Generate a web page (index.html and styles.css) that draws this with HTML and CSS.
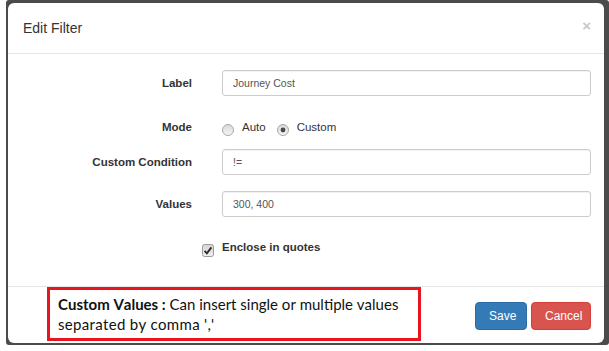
FILE: index.html
```html
<!DOCTYPE html>
<html>
<head>
<meta charset="utf-8">
<link rel="stylesheet" href="styles.css">
</head>
<body>
<div class="frame">
  <div class="modal">
    <div class="modal-header">
      <h4 class="title">Edit Filter</h4>
      <span class="close">×</span>
    </div>
    <div class="modal-body">
      <div class="row r1">
        <label class="lbl">Label</label>
        <div class="ctl"><input class="input" type="text" value="Journey Cost"></div>
      </div>
      <div class="row r2">
        <label class="lbl">Mode</label>
        <div class="ctl radios">
          <span class="radio">
            <svg width="12" height="12" viewBox="0 0 12 12"><defs><linearGradient id="rg" x1="0" y1="0" x2="0" y2="1"><stop offset="0" stop-color="#d8d8d8"/><stop offset="1" stop-color="#f7f7f7"/></linearGradient></defs><circle cx="6" cy="6" r="5.5" fill="url(#rg)" stroke="#a9a9a9"/></svg>
            <span class="rtext">Auto</span>
          </span>
          <span class="radio">
            <svg width="12" height="12" viewBox="0 0 12 12"><circle cx="6" cy="6" r="5.5" fill="url(#rg)" stroke="#a9a9a9"/><circle cx="6" cy="6" r="2.4" fill="#4a4a4a"/></svg>
            <span class="rtext">Custom</span>
          </span>
        </div>
      </div>
      <div class="row r3">
        <label class="lbl">Custom Condition</label>
        <div class="ctl"><input class="input" type="text" value="!="></div>
      </div>
      <div class="row r4">
        <label class="lbl">Values</label>
        <div class="ctl"><input class="input" type="text" value="300, 400"></div>
      </div>
      <div class="row r5">
        <span></span>
        <div class="ctl check">
          <svg class="cbox" width="12" height="13" viewBox="0 0 12 13"><defs><linearGradient id="cg" x1="0" y1="0" x2="0" y2="1"><stop offset="0" stop-color="#d4d4d4"/><stop offset="1" stop-color="#efefef"/></linearGradient></defs><rect x="0.5" y="0.5" width="11" height="12" rx="2" fill="url(#cg)" stroke="#9a9a9a"/><path d="M2.6 6.8 L4.9 9.3 L9.4 3.4" fill="none" stroke="#2b2b2b" stroke-width="1.9"/></svg>
          <span class="ctext">Enclose in quotes</span>
        </div>
      </div>
    </div>
    <div class="modal-footer">
      <div class="note">
        <div class="line"><b>Custom Values :</b> Can insert single or multiple values</div>
        <div class="line line2">separated by comma ','</div>
      </div>
      <div class="actions">
        <button class="btn save">Save</button>
        <button class="btn cancel">Cancel</button>
      </div>
    </div>
  </div>
</div>
</body>
</html>
```
FILE: styles.css
```css
html, body {
  margin: 0;
  padding: 0;
  background: #ffffff;
}
body {
  font-family: "Liberation Sans", Arial, sans-serif;
  color: #333;
}
.frame {
  margin-left: 6px;
  width: 603px;
  height: 345px;
  box-sizing: border-box;
  padding: 3px 5px 2px 2px;
  background: #4b4b4b;
  border-radius: 3px;
}
.modal {
  background: #fff;
  border-radius: 6px;
  height: 340px;
  display: flex;
  flex-direction: column;
  overflow: hidden;
}
.modal-header {
  height: 50px;
  border-bottom: 1px solid #e5e5e5;
  display: flex;
  justify-content: space-between;
  align-items: center;
  padding: 0 13px 0 15px;
  flex: none;
}
.title {
  margin: 0;
  font-size: 14px;
  font-weight: normal;
  color: #333;
}
.close {
  align-self: flex-start;
  margin-top: 15px;
  font-size: 15px;
  font-weight: bold;
  line-height: 15px;
  color: #c8c8c8;
}
.modal-body {
  height: 232px;
  box-sizing: border-box;
  padding: 0 13px 0 0;
  flex: none;
}
.row {
  display: grid;
  grid-template-columns: 184px 1fr;
  column-gap: 30px;
  height: 26px;
  align-items: center;
}
.r1 { margin-top: 16px; }
.r2 { margin-top: 18px; }
.r3 { margin-top: 9px; }
.r4 { margin-top: 16px; }
.r5 { margin-top: 17px; }
.lbl {
  text-align: right;
  font-size: 11.5px;
  font-weight: bold;
  color: #333;
}
.input {
  display: block;
  width: 100%;
  height: 26px;
  box-sizing: border-box;
  border: 1px solid #cccccc;
  border-radius: 3px;
  padding: 0 10px;
  font-family: "Liberation Sans", Arial, sans-serif;
  font-size: 10.5px;
  color: #555;
  box-shadow: inset 0 1px 1px rgba(0,0,0,0.06);
  outline: none;
}
.radios {
  display: flex;
  align-items: center;
}
.radio {
  display: flex;
  align-items: center;
}
.radio svg {
  display: block;
  margin-top: 6px;
}
.rtext {
  font-size: 11.5px;
  margin-left: 8px;
  margin-right: 11px;
  color: #333;
}
.check {
  display: flex;
  align-items: center;
  margin-left: -20px;
}
.cbox {
  display: block;
  margin-top: 6px;
  margin-right: 8px;
}
.ctext {
  font-size: 11.5px;
  font-weight: bold;
  color: #333;
}
.modal-footer {
  border-top: 1px solid #e5e5e5;
  flex: 1;
  display: flex;
  justify-content: space-between;
  align-items: flex-start;
  padding: 0 13px 0 39px;
}
.note {
  width: 374px;
  height: 54px;
  box-sizing: border-box;
  border: 3px solid #e8141e;
  padding: 4px 8px 0 8px;
  font-family: Lato, "Open Sans", sans-serif;
  font-size: 15px;
  line-height: 20px;
  color: #111;
  font-kerning: none;
}
.line {
  white-space: nowrap;
}
.line2 {
  letter-spacing: 0.3px;
}
.note b {
  font-weight: bold;
}
.actions {
  display: flex;
  gap: 4px;
  margin-top: 15px;
}
.btn {
  height: 28px;
  border-radius: 4px;
  font-family: "Liberation Sans", Arial, sans-serif;
  font-size: 12px;
  color: #fff;
  padding: 0 13px;
  border: 1px solid transparent;
}
.save {
  background: #337ab7;
  border-color: #2e6da4;
  width: 52px;
}
.cancel {
  background: #d9534f;
  border-color: #d43f3a;
  width: 60px;
}
```
